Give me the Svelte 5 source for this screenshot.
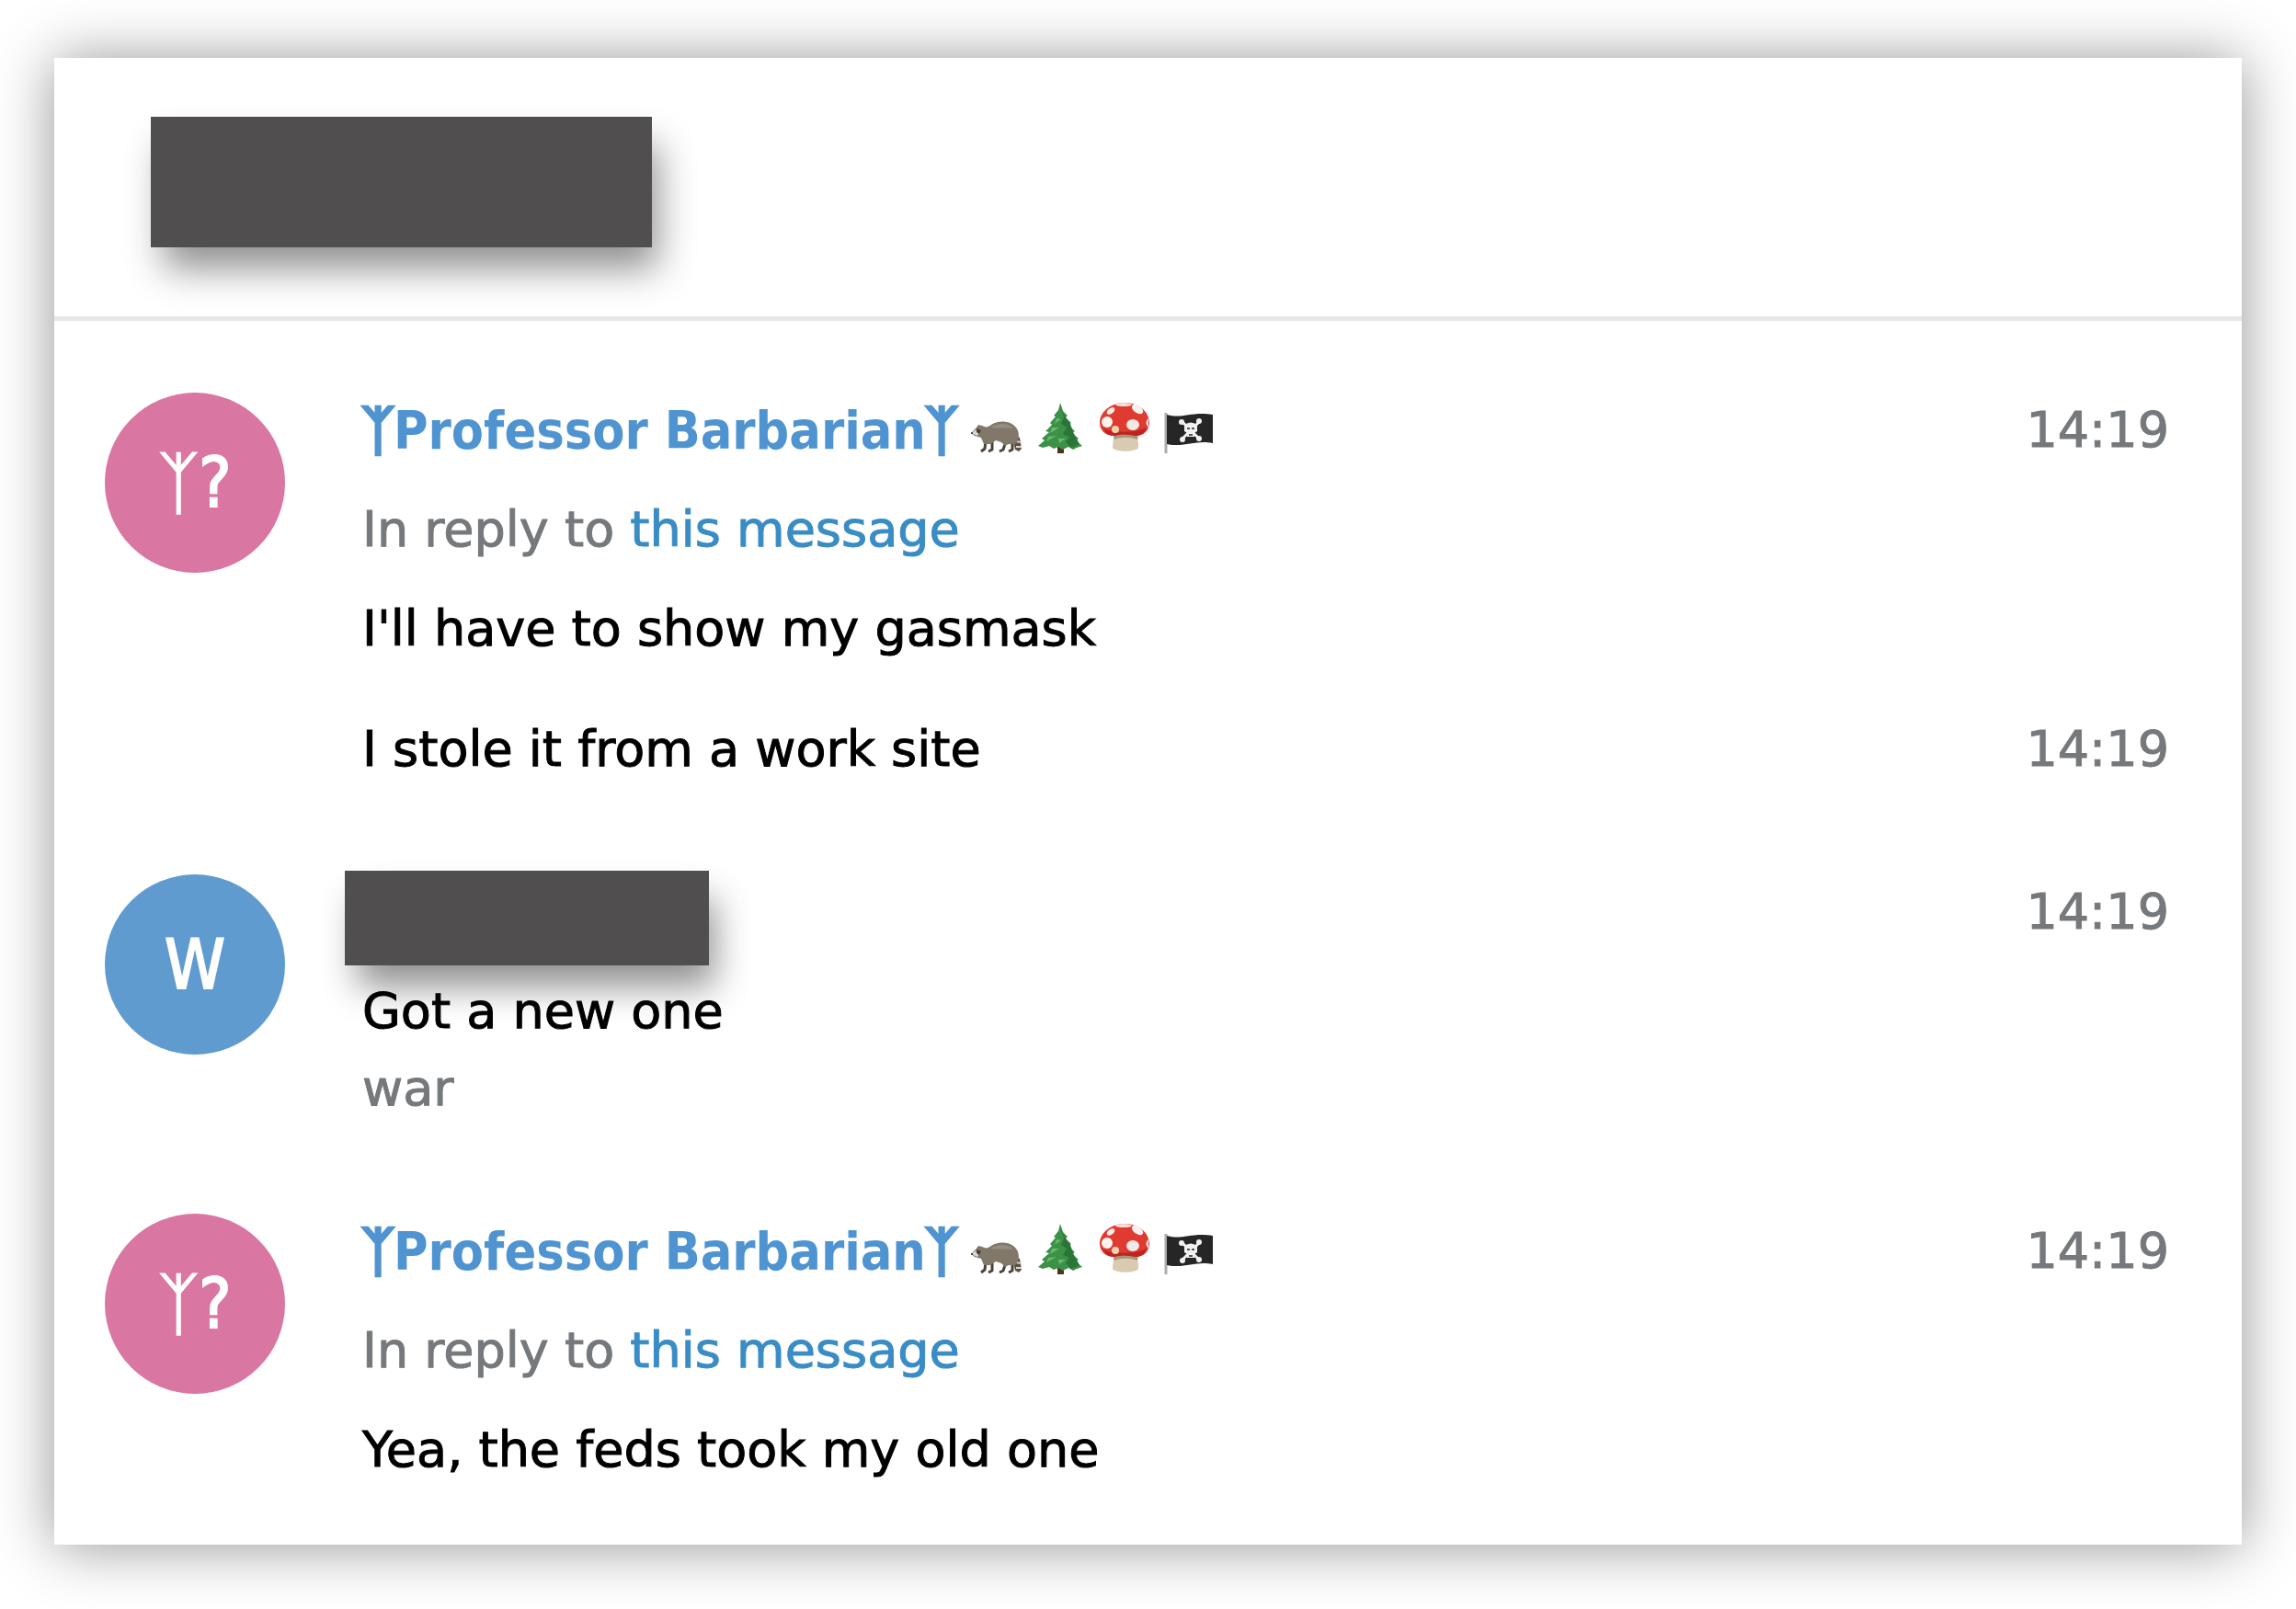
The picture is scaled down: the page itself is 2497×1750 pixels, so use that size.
<script lang="ts">
  type Message = {
    text: string;
    time: string;
    reply?: boolean;
    signature?: string;
  };

  type Group = {
    initials: string;
    color: string;
    name: string | null;
    messages: Message[];
  };

  const groups: Group[] = [
    {
      initials: 'ᛉ?',
      color: '#d977a2',
      name: 'Professor Barbarian',
      messages: [
        { text: "I'll have to show my gasmask", time: '14:19', reply: true },
        { text: 'I stole it from a work site', time: '14:19' },
      ],
    },
    {
      initials: 'W',
      color: '#609bd0',
      name: null,
      messages: [{ text: 'Got a new one', time: '14:19', signature: 'war' }],
    },
    {
      initials: 'ᛉ?',
      color: '#d977a2',
      name: 'Professor Barbarian',
      messages: [{ text: 'Yea, the feds took my old one', time: '14:19', reply: true }],
    },
  ];
</script>

{#snippet badges()}
  <span class="badges">
    <svg viewBox="0 0 56 56" role="img" aria-label="raccoon">
      <path d="M47 36 L54 39 L56 51 L53 54 L49 52 L47 43Z" fill="#5b5248" />
      <path d="M49 43 L56 44 M50 49 L56 49" stroke="#ddd6ca" stroke-width="2" />
      <path d="M17 42 L16 51 L12 54 M24 43 L24 52 L20 54 M39 43 L36 52 L32 54 M46 42 L46 52 L42 54" fill="none" stroke="#4b433a" stroke-width="3" stroke-linejoin="round" />
      <path d="M1 34 L7 28 L9 25 L13 26 C17 28 19 28 23 25 C30 20 44 20 50 28 C54 33 54 42 49 46 L42 46 L38 48 L34 44 L28 42 L22 46 L15 46 L12 39 L5 37Z" fill="#81786a" />
      <path d="M22 28 C30 23 42 23 47 29 C40 28 30 29 22 28Z" fill="#a0978a" opacity="0.7" />
      <path d="M1 34 L7 30 L10 33 L8 37Z" fill="#ddd7cf" />
      <path d="M7 29 L12 31 L10 35 L7 33Z" fill="#463f38" />
      <circle cx="2" cy="34" r="1" fill="#222" />
    </svg>
    <svg viewBox="0 0 56 56" role="img" aria-label="evergreen tree">
      <path d="M25 44 h7 v12 h-7Z" fill="#50341f" />
      <path d="M28 1 L31 10 L36 15 L34 17 L40 23 L37 25 L44 32 L41 34 L48 40 L45 42 L52 48 L46 50 L42 52 L37 49 L31 52 L26 49 L21 51 L16 48 L9 50 L4 48 L11 42 L8 40 L16 33 L12 32 L19 25 L17 23 L23 16 L21 15 L26 9Z" fill="#3c9148" />
      <path d="M28 4 L31 12 L34 17 L39 24 L42 33 L49 46 L40 50 L34 44 L38 38 L31 35 L35 28 L29 24 L32 17Z" fill="#2b7538" />
      <path d="M24 18 L29 19 L22 24Z M19 28 L27 28 L17 34Z M15 38 L24 37 L13 43Z M26 40 L34 40 L27 45Z" fill="#69b96f" />
    </svg>
    <svg viewBox="0 0 56 56" role="img" aria-label="mushroom">
      <path d="M15 32 H43 C41 40 44 46 43 50 C40 55 18 55 15 50 C15 45 17 40 15 32Z" fill="#d9cbb2" />
      <path d="M15 34 H43 L42 41 C34 38 24 38 17 41Z" fill="#a8967a" />
      <path d="M1 22 C2 9 15 1 28 1 C42 1 54 9 55 22 C55 32 48 37 40 37 C32 35 24 35 17 37 C7 37 1 31 1 22Z" fill="#df3b31" />
      <path d="M5 29 C14 34 42 34 52 28 C50 34 46 37 40 37 C32 35 24 35 17 37 C11 37 7 34 5 29Z" fill="#bd2522" />
      <ellipse cx="27" cy="3" rx="9" ry="2" fill="#f4dcd7" />
      <ellipse cx="13" cy="10" rx="5" ry="3" transform="rotate(-38 13 10)" fill="#f8e9e5" />
      <ellipse cx="42" cy="8" rx="7" ry="4" transform="rotate(35 42 8)" fill="#faf0ed" />
      <ellipse cx="9" cy="22" rx="6" ry="6" fill="#faf3ef" />
      <ellipse cx="37" cy="25" rx="7" ry="6" fill="#f2ebe5" />
      <circle cx="18" cy="30" r="4" fill="#f0d2b4" />
      <path d="M54 18 Q49 22 54 28Z" fill="#f8e9e5" />
    </svg>
    <svg viewBox="0 0 56 56" role="img" aria-label="pirate flag">
      <path d="M3 12 V56" stroke="#a9abad" stroke-width="3" />
      <path d="M4 14 C20 19 31 10 54 14 V45 C35 41 24 50 4 46Z" fill="#262626" />
      <path d="M21 22 L39 40 M39 22 L21 40" stroke="#f1f1f1" stroke-width="3" />
      <g fill="#f1f1f1">
        <circle cx="20" cy="22" r="3" />
        <circle cx="39" cy="21" r="3" />
        <circle cx="21" cy="41" r="3" />
        <circle cx="39" cy="40" r="3" />
        <path d="M23 25 Q30 20 37 25 V32 L34 34 V38 H26 V34 L23 32Z" />
      </g>
      <path d="M26 29 h3 M31 29 h3 M28 36 h4" stroke="#555" stroke-width="2" />
    </svg>
  </span>
{/snippet}

<main class="page">
  <header class="page_header">
    <div class="redacted chat_title"></div>
  </header>

  <div class="history">
    {#each groups as group}
      <section class="group">
        <div class="userpic" style="background-color: {group.color}">{group.initials}</div>

        <div class="messages">
          {#each group.messages as message, i}
            <article class="message">
              <div class="body">
                {#if i === 0}
                  {#if group.name}
                    <div class="from_name">
                      <span><span class="rune">ᛉ</span>{group.name}<span class="rune">ᛉ</span></span>
                      {@render badges()}
                    </div>
                  {:else}
                    <div class="redacted sender"></div>
                  {/if}
                {/if}
                {#if message.reply}
                  <div class="details">In reply to <a href="#message">this message</a></div>
                {/if}
                <div class="text">
                  {message.text}
                  {#if message.signature}
                    <div class="signature">{message.signature}</div>
                  {/if}
                </div>
              </div>
              <time>{message.time}</time>
            </article>
          {/each}
        </div>
      </section>
    {/each}
  </div>
</main>

<style>
  :global(body) {
    background-color: #fff;
  }

  .page {
    margin: 63px 59px 70px;
    background-color: #fff;
    box-shadow: 0 2px 60px rgba(0, 0, 0, 0.42);
    color: #000;
    font-family: "DejaVu Sans", sans-serif;
    font-size: 54px;
    line-height: 84px;
  }

  .page_header {
    padding: 64px 105px 75px;
    border-bottom: 5px solid #e7e7e7;
  }

  .redacted {
    background-color: #504e4f;
    box-shadow: 10px 27px 38px -4px rgba(0, 0, 0, 0.44);
  }

  .chat_title {
    width: 545px;
    height: 142px;
  }

  /* the bar is taller than a line and reaches past it on every side */
  .sender {
    width: 396px;
    height: 103px;
    margin: -3px 0 -16px -19px;
  }

  .history {
    display: flex;
    flex-direction: column;
    gap: 93px;
    padding: 77px 79px 61px 55px;
  }

  .group {
    display: flex;
    align-items: flex-start;
    gap: 84px;
  }

  .userpic {
    display: flex;
    flex: none;
    align-items: center;
    justify-content: center;
    width: 196px;
    height: 196px;
    margin-top: 1px;
    border-radius: 50%;
    color: #fff;
    font-family: "DejaVu Sans Condensed", "DejaVu Sans", sans-serif;
    font-size: 74px;
    -webkit-text-stroke: 2px currentColor;
  }

  .messages {
    display: flex;
    flex: 1;
    flex-direction: column;
    gap: 47px;
    -webkit-text-stroke: 1px currentColor;
  }

  .message {
    display: flex;
    justify-content: space-between;
  }

  .body {
    display: flex;
    flex-direction: column;
    gap: 24px;
  }

  .from_name {
    display: flex;
    align-items: center;
    gap: 14px;
    height: 84px;
    color: #4f94d0;
    font-family: "DejaVu Sans Condensed", "DejaVu Sans", sans-serif;
    font-size: 57px;
    font-weight: 700;
    -webkit-text-stroke: 0;
  }

  .rune {
    -webkit-text-stroke: 3px currentColor;
  }

  .badges {
    display: flex;
    gap: 14px;
    margin-bottom: 6px;
  }

  .badges svg {
    width: 56px;
    height: 56px;
  }

  .details,
  .signature,
  time {
    color: #75797c;
  }

  a {
    color: #3a8cc5;
    text-decoration: none;
  }
</style>
